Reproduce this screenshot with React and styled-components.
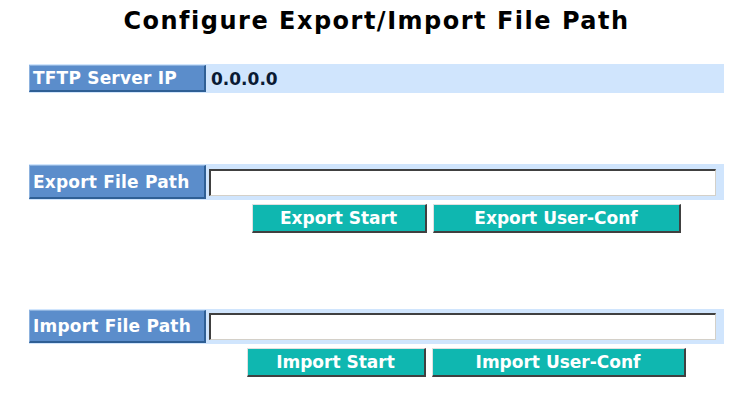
import React from 'react'
import styled, { createGlobalStyle } from 'styled-components'

const GlobalStyle = createGlobalStyle`
    body {
        margin: 0;
        background: #ffffff;
        font-family: "DejaVu Sans", Verdana, sans-serif;
    }
`

const Page = styled.div`
    display: flex;
    flex-direction: column;
    padding: 6px 0 0 29px;
    width: 695px;
`

const Title = styled.h1`
    margin: 0 0 28px;
    font-size: 24px;
    line-height: 30px;
    letter-spacing: 1.5px;
    font-weight: bold;
    text-align: center;
    color: #000;
`

const Section = styled.div`
    display: flex;
    flex-direction: column;
    gap: 4px;
    margin-top: ${({ top }) => top}px;
`

const Row = styled.div`
    display: grid;
    grid-template-columns: 177px 1fr;
    gap: 2px;
    padding: 1px 0;
    background: #d0e5fd;
    height: ${({ h }) => h}px;
    box-sizing: border-box;
`

const Label = styled.div`
    display: flex;
    align-items: center;
    padding-left: 3px;
    background: #5b8dcb;
    border-top: 1px solid #8db2de;
    border-left: 1px solid #8db2de;
    border-right: 2px solid #2f5f95;
    border-bottom: 2px solid #2f5f95;
    color: #fff;
    font-size: 17px;
    letter-spacing: 0.2px;
    font-weight: bold;
    box-sizing: border-box;
    white-space: nowrap;
`

const Value = styled.div`
    display: flex;
    align-items: center;
    padding-left: ${({ pad }) => pad}px;
    color: #0a1a33;
    font-size: 17px;
    font-weight: bold;
`

const PathInput = styled.input`
    width: 507px;
    height: 27px;
    box-sizing: border-box;
    margin: 0;
    border-top: 2px solid #404040;
    border-left: 2px solid #404040;
    border-right: 1px solid #d4d0c8;
    border-bottom: 1px solid #d4d0c8;
    background: #fff;
    outline: none;
`

const Buttons = styled.div`
    display: flex;
    justify-content: center;
    gap: 6px;
    margin-left: 179px;
`

const Button = styled.button`
    width: ${({ w }) => w}px;
    height: 29px;
    box-sizing: border-box;
    padding: 0;
    background: #0fb7b0;
    border-top: 1px solid #e0e0e0;
    border-left: 1px solid #e0e0e0;
    border-right: 2px solid #404040;
    border-bottom: 2px solid #404040;
    color: #fff;
    font-family: "DejaVu Sans", Verdana, sans-serif;
    font-size: 17px;
    font-weight: bold;
`

const App = () => {
    return (
        <>
            <GlobalStyle />
            <Page>
                <Title>Configure Export/Import File Path</Title>
                <Row h={29}>
                    <Label>TFTP Server IP</Label>
                    <Value pad={3}>0.0.0.0</Value>
                </Row>
                <Section top={71}>
                    <Row h={36}>
                        <Label>Export File Path</Label>
                        <Value pad={1}><PathInput type="text" /></Value>
                    </Row>
                    <Buttons>
                        <Button w={175}>Export Start</Button>
                        <Button w={248}>Export User-Conf</Button>
                    </Buttons>
                </Section>
                <Section top={76}>
                    <Row h={35}>
                        <Label>Import File Path</Label>
                        <Value pad={1}><PathInput type="text" /></Value>
                    </Row>
                    <Buttons>
                        <Button w={179}>Import Start</Button>
                        <Button w={254}>Import User-Conf</Button>
                    </Buttons>
                </Section>
            </Page>
        </>
    )
}

export default App
